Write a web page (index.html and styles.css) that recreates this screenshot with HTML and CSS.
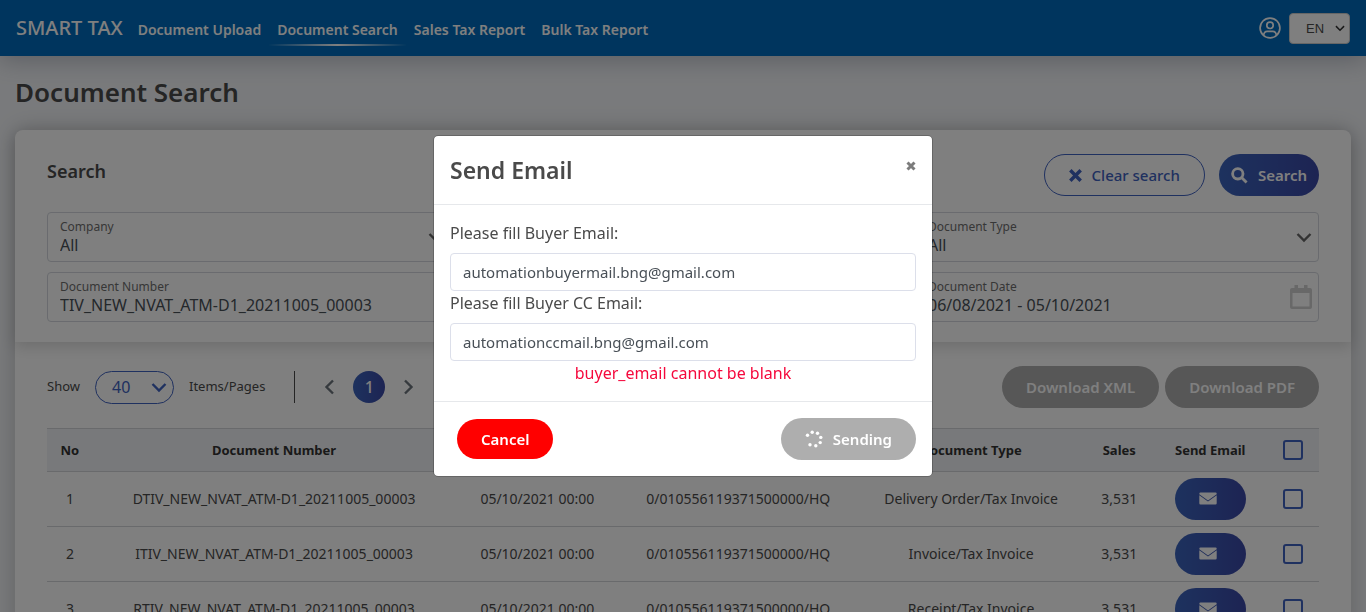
FILE: index.html
```html
<!DOCTYPE html>
<html lang="en">
<head>
<meta charset="utf-8">
<meta name="viewport" content="width=device-width, initial-scale=1">
<title>Smart Tax - Document Search</title>
<link rel="stylesheet" href="styles.css">
</head>
<body>
<svg class="sprite" width="0" height="0" aria-hidden="true">
  <symbol id="chevron" viewBox="0 0 16 16"><path d="M1.5 5 8 11.5 14.5 5" fill="none" stroke="currentColor" stroke-width="2.4"/></symbol>
  <symbol id="mail" viewBox="0 0 18 14"><path d="M1.500.5h15q1.200 0 1.200 1.200v.6L9 8.400.300 2.300v-.6Q.300.500 1.500.5Z"/><path d="M.300 3.300 9 9.400l8.700-6.100v8q0 1.200-1.200 1.200h-15q-1.200 0-1.200-1.200Z"/></symbol>
</svg>

<header class="navbar">
  <a class="brand" href="#">SMART TAX</a>
  <nav class="nav">
    <a class="nav-link" href="#">Document Upload</a>
    <a class="nav-link active" href="#" aria-current="page">Document Search</a>
    <a class="nav-link" href="#">Sales Tax Report</a>
    <a class="nav-link" href="#">Bulk Tax Report</a>
  </nav>
  <button class="account" type="button" aria-label="Account">
    <svg width="22" height="22" viewBox="0 0 22 22" fill="none" stroke="currentColor" stroke-width="1.700"><circle cx="11" cy="11" r="9.900"/><circle cx="11" cy="8.300" r="3.200"/><path d="M4.600 18.400c.3-2.600 1.500-4 3.600-4h5.600c2.100 0 3.300 1.400 3.600 4"/></svg>
  </button>
  <span class="language">
    <select aria-label="Language"><option>EN</option></select>
    <svg class="chev" width="10" height="10"><use href="#chevron"/></svg>
  </span>
</header>

<main class="page">
  <h1>Document Search</h1>
  <section class="card">
    <form class="search">
      <div class="search-head">
        <h2>Search</h2>
        <button class="btn outline" type="reset">
          <svg width="13" height="13" viewBox="0 0 12 12" stroke="currentColor" stroke-width="3.200"><path d="m1.200 1.200 9.600 9.600M10.800 1.200 1.200 10.800"/></svg>
          Clear search
        </button>
        <button class="btn primary" type="button">
          <svg width="17" height="17" viewBox="0 0 18 18" fill="none" stroke="currentColor" stroke-width="3"><circle cx="7.200" cy="7.200" r="5.500"/><path d="m11.200 11.200 5.300 5.300"/></svg>
          Search
        </button>
      </div>
      <div class="fields">
        <div class="field">
          <label for="company">Company</label>
          <select id="company"><option>All</option></select>
          <svg class="chev" width="16" height="16"><use href="#chevron"/></svg>
        </div>
        <div class="field last">
          <label for="type">Document Type</label>
          <select id="type"><option>All</option></select>
          <svg class="chev" width="16" height="16"><use href="#chevron"/></svg>
        </div>
        <div class="field">
          <label for="number">Document Number</label>
          <input id="number" type="text" value="TIV_NEW_NVAT_ATM-D1_20211005_00003">
        </div>
        <div class="field last">
          <label for="date">Document Date</label>
          <input id="date" type="text" value="06/08/2021 - 05/10/2021">
          <svg class="calendar" width="22" height="24" viewBox="0 0 22 24"><path fill="currentColor" fill-rule="evenodd" d="M2 3h2.500V0H8v3h6V0h3.500v3H20q2 0 2 2v17q0 2-2 2H2q-2 0-2-2V5q0-2 2-2Zm.500 5v13.500h17V8Z"/></svg>
        </div>
      </div>
    </form>

    <div class="results">
      <div class="toolbar">
        <label for="size">Show</label>
        <span class="page-size">
          <select id="size"><option>40</option></select>
          <svg class="chev" width="16" height="16"><use href="#chevron"/></svg>
        </span>
        <span class="unit">Items/Pages</span>
        <nav class="pager" aria-label="Pages">
          <button type="button" aria-label="Previous page"><svg class="prev" width="16" height="16"><use href="#chevron"/></svg></button>
          <button class="current" type="button">1</button>
          <button type="button" aria-label="Next page"><svg class="next" width="16" height="16"><use href="#chevron"/></svg></button>
        </nav>
        <div class="downloads">
          <button class="btn muted" type="button">Download XML</button>
          <button class="btn muted" type="button">Download PDF</button>
        </div>
      </div>

      <table>
        <colgroup><col class="c-no"><col class="c-num"><col class="c-date"><col class="c-id"><col class="c-type"><col class="c-sales"><col class="c-mail"><col class="c-check"></colgroup>
        <thead>
          <tr><th>No</th><th>Document Number</th><th></th><th></th><th>Document Type</th><th>Sales</th><th>Send Email</th><th><input type="checkbox" aria-label="Select all"></th></tr>
        </thead>
        <tbody>
          <tr><td>1</td><td>DTIV_NEW_NVAT_ATM-D1_20211005_00003</td><td>05/10/2021 00:00</td><td>0/010556119371500000/HQ</td><td>Delivery Order/Tax Invoice</td><td>3,531</td><td><button class="btn primary mail" type="button" aria-label="Send email"><svg width="18" height="14" fill="currentColor"><use href="#mail"/></svg></button></td><td><input type="checkbox" aria-label="Select row 1"></td></tr>
          <tr><td>2</td><td>ITIV_NEW_NVAT_ATM-D1_20211005_00003</td><td>05/10/2021 00:00</td><td>0/010556119371500000/HQ</td><td>Invoice/Tax Invoice</td><td>3,531</td><td><button class="btn primary mail" type="button" aria-label="Send email"><svg width="18" height="14" fill="currentColor"><use href="#mail"/></svg></button></td><td><input type="checkbox" aria-label="Select row 2"></td></tr>
          <tr><td>3</td><td>RTIV_NEW_NVAT_ATM-D1_20211005_00003</td><td>05/10/2021 00:00</td><td>0/010556119371500000/HQ</td><td>Receipt/Tax Invoice</td><td>3,531</td><td><button class="btn primary mail" type="button" aria-label="Send email"><svg width="18" height="14" fill="currentColor"><use href="#mail"/></svg></button></td><td><input type="checkbox" aria-label="Select row 3"></td></tr>
        </tbody>
      </table>
    </div>
  </section>
</main>

<div class="backdrop">
  <form class="modal" role="dialog" aria-modal="true" aria-labelledby="modal-title">
    <div class="modal-head">
      <h2 id="modal-title">Send Email</h2>
      <button class="close" type="button" aria-label="Close"><svg width="10" height="10" viewBox="0 0 10 10" stroke="currentColor" stroke-width="3"><path d="m1.500 1.500 7 7M8.500 1.500l-7 7"/></svg></button>
    </div>
    <div class="modal-body">
      <label for="buyer">Please fill Buyer Email:</label>
      <input id="buyer" type="text" value="automationbuyermail.bng@gmail.com">
      <label for="cc">Please fill Buyer CC Email:</label>
      <input id="cc" type="text" value="automationccmail.bng@gmail.com">
      <p class="error">buyer_email cannot be blank</p>
    </div>
    <div class="modal-foot">
      <button class="btn danger" type="button">Cancel</button>
      <button class="btn sending" type="button">
        <svg width="18" height="18" viewBox="0 0 18 18" fill="currentColor"><circle cx="7.200" cy="2.300" r="1.700"/><circle cx="12.500" cy="3.300" r="1.700"/><circle cx="15.800" cy="7.400" r="1.700"/><circle cx="15.200" cy="12.600" r="1.700"/><circle cx="10.800" cy="15.800" r="1.700"/><circle cx="5" cy="14.800" r="1.700"/><circle cx="2.500" cy="5.300" r="1.700"/></svg>
        Sending
      </button>
    </div>
  </form>
</div>
</body>
</html>
```
FILE: styles.css
```css
* { box-sizing: border-box; }

body {
  margin: 0;
  height: 100vh;
  overflow: hidden;
  background: #f3f5f8;
  color: #4a4a4a;
  font: 16px/24px "Noto Sans", sans-serif;
}

h1, h2, p { margin: 0; font-weight: 600; }
button, input, select { font: inherit; color: inherit; margin: 0; }
button { border: 0; background: none; padding: 0; }
select { appearance: none; border: 0; background: none; }
a { color: inherit; text-decoration: none; }
svg { flex: none; display: block; }
.sprite { position: absolute; }

.navbar {
  position: relative;
  display: flex;
  align-items: center;
  height: 56px;
  padding: 0 16px;
  background: #006bbc;
  color: #fff;
  box-shadow: 0 4px 24px rgba(40, 50, 80, .3);
}
.brand { font-size: 20px; font-weight: 500; margin-right: 7px; }
.nav { display: flex; flex: 1; }
.nav-link {
  padding: 8px 8px 2px;
  font-size: 14px;
  font-weight: 600;
  line-height: 24px;
  border-bottom: 2px solid transparent;
}
.nav-link.active { border-image: linear-gradient(90deg, transparent, #fff, transparent) 1; }
.account { margin-right: 8px; }
.language { display: grid; align-items: center; }
.language > * { grid-area: 1 / 1; }
.language select {
  width: 61px;
  height: 31px;
  padding: 0 16px;
  border: 1px solid #ccc;
  border-radius: 4px;
  background: #fff;
  color: #4a4a4a;
  font: 13px "Liberation Sans", sans-serif;
}
.language .chev { justify-self: end; margin-right: 5px; color: #333; pointer-events: none; }

.page { padding: 16px 15px; }
h1 { font-size: 26px; line-height: 40px; margin-bottom: 18px; }
.card { border-radius: 8px; background: #fff; box-shadow: 0 0 24px rgba(0, 0, 0, .2); }

.search {
  padding: 24px 32px 20px;
  box-shadow: 0 4px 16px rgba(0, 0, 0, .16);
  border-radius: 8px 8px 0 0;
}
.search-head { display: flex; align-items: flex-start; gap: 14px; margin-bottom: 16px; }
.search-head h2 { flex: 1; font-size: 18px; line-height: 34px; }

.btn {
  display: inline-flex;
  align-items: center;
  justify-content: center;
  gap: 10px;
  height: 42px;
  padding: 0 24px;
  border-radius: 24px;
  color: #fff;
  font-size: 15px;
  font-weight: 600;
  white-space: nowrap;
}
.btn.outline { border: 1px solid #3f62c0; color: #3f62c0; font-weight: 500; }
.btn.primary { background: linear-gradient(90deg, #3b64bd, #3b48a6); }
.search .btn.primary { padding: 0 12px; }
.btn.muted, .btn.sending { background: #aeaeae; }
.btn.danger { height: 40px; background: #f00; }
.btn.mail { width: 71px; padding: 0 28px 0 24px; }

.fields { display: grid; grid-template-columns: repeat(3, 1fr); gap: 10px 30px; }
.field {
  display: grid;
  grid-template: 17px 20px / 1fr auto;
  align-content: start;
  height: 50px;
  padding: 5px 6px 6px 12px;
  border: 1px solid #d4d7de;
  border-radius: 4px;
}
.field.last { grid-column: 3; }
.field label { grid-area: 1 / 1; font-size: 12px; line-height: 17px; color: #6e6e6e; }
.field input, .field select {
  grid-area: 2 / 1 / 3 / 3;
  width: 100%;
  height: 20px;
  padding: 0;
  border: 0;
  background: none;
  line-height: 20px;
  color: #495057;
}
.field svg { grid-area: 1 / 2 / 3 / 3; align-self: center; color: #666; pointer-events: none; }
.field .calendar { color: #d0d0d0; }

.results { padding: 24px 32px 0; }
.toolbar { display: flex; align-items: center; margin-bottom: 20px; font-size: 13px; }
.toolbar > label, .unit { padding-bottom: 3px; }
.page-size { display: grid; align-items: center; margin: 0 15px; color: #3f62c0; }
.page-size > * { grid-area: 1 / 1; }
.page-size select {
  width: 79px;
  height: 33px;
  padding: 0 16px;
  border: 1px solid #3f62c0;
  border-radius: 17px;
  font-size: 16px;
}
.page-size .chev { justify-self: end; margin-right: 7px; pointer-events: none; }
.pager {
  display: flex;
  align-items: center;
  gap: 15px;
  height: 32px;
  margin-left: 29px;
  padding-left: 27px;
  border-left: 1px solid #4a4a4a;
}
.pager button { color: #6c757d; }
.prev { transform: rotate(90deg); }
.next { transform: rotate(-90deg); }
.pager .current {
  width: 32px;
  height: 32px;
  border-radius: 50%;
  background: linear-gradient(90deg, #3b64bd, #3b48a6);
  color: #fff;
  font-size: 16px;
  font-weight: 500;
}
.downloads { display: flex; gap: 6px; margin-left: auto; }

table { width: 100%; table-layout: fixed; border-collapse: collapse; font-size: 14px; line-height: 20px; }
.c-no { width: 3.6%; }
.c-num { width: 28.5%; }
.c-date { width: 12.9%; }
.c-id { width: 18.7%; }
.c-type { width: 17.9%; }
.c-sales { width: 5.4%; }
.c-mail { width: 8.9%; }
.c-check { width: 4.1%; }
th, td { padding: 6px 0; border: 1px solid #d2d5d8; border-width: 1px 0; text-align: center; white-space: nowrap; }
th { height: 43px; background: #f1f3f6; color: #333; font-size: 13px; font-weight: 700; }
td .btn { vertical-align: top; }
input[type="checkbox"] {
  appearance: none;
  display: block;
  width: 20px;
  height: 20px;
  margin: 0 auto;
  border: 2px solid #3f62c0;
  border-radius: 3px;
}

.backdrop {
  position: fixed;
  inset: 0;
  display: flex;
  align-items: center;
  justify-content: center;
  background: rgba(0, 0, 0, .5);
}
.modal { width: 100%; max-width: 498px; border-radius: 4px; background: #fff; outline: 1px solid rgba(0, 0, 0, .2); }
.modal-head { display: flex; justify-content: space-between; align-items: flex-start; padding: 16px; border-bottom: 1px solid #e6e8eb; }
.modal-head h2 { font-size: 23px; line-height: 36px; }
.close { margin-top: 9px; color: #7c7c7c; }
.modal-body { padding: 16px; }
.modal-body label { display: block; margin-bottom: 8px; }
.modal-body input {
  display: block;
  width: 100%;
  height: 38px;
  padding: 6px 12px;
  border: 1px solid #dcdfea;
  border-radius: 4px;
  color: #495057;
  font-size: 15px;
}
.error { color: #f5083c; text-align: center; font-weight: 400; }
.modal-foot { display: flex; align-items: center; justify-content: space-between; padding: 16px 16px 16px 23px; border-top: 1px solid #e6e8eb; }
```
